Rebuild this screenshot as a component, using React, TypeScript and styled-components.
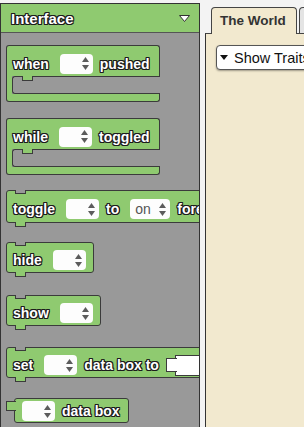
import React from "react";
import styled, { createGlobalStyle, css } from "styled-components";

const GREEN = "#8fca70";
const EDGE = "#3b3b3b";
const CANVAS = "#999999";
const BEIGE = "#f2e9cf";

const GlobalStyle = createGlobalStyle`
  html, body {
    margin: 0;
    padding: 0;
    background: #f3f3f3;
  }
  body {
    font-family: "Liberation Sans", Arial, sans-serif;
  }
`;

const outlined = css`
  color: #fff;
  font-weight: bold;
  text-shadow: -1px -1px 0 #1c1c1c, 0 -1px 0 #1c1c1c, 1px -1px 0 #1c1c1c,
    -1px 0 0 #1c1c1c, 1px 0 0 #1c1c1c, -1px 1px 0 #1c1c1c, 0 1px 0 #1c1c1c,
    1px 1px 0 #1c1c1c;
`;

const Page = styled.div`
  display: flex;
  height: 427px;
  padding-top: 3px;
  box-sizing: border-box;
  overflow: hidden;
`;

const Sidebar = styled.div`
  width: 200px;
  flex: none;
  box-sizing: border-box;
  border: 1px solid #333;
  border-bottom: none;
  background: ${CANVAS};
  display: flex;
  flex-direction: column;
  overflow: hidden;
`;

const CategoryHeader = styled.div`
  height: 29px;
  flex: none;
  box-sizing: border-box;
  background: ${GREEN};
  border-bottom: 1px solid #555;
  display: flex;
  align-items: center;
  justify-content: space-between;
  padding: 0 9px 0 10px;
`;

const HeaderTitle = styled.span`
  ${outlined};
  font-size: 15px;
`;

const Palette = styled.div`
  display: flex;
  flex-direction: column;
  align-items: flex-start;
  padding: 12px 0 0 5px;
`;

const Label = styled.span`
  ${outlined};
  font-size: 14px;
  white-space: nowrap;
`;

/* statement block: notch on top, tab below */
const StackBlock = styled.div<{ $mt: number; $h?: number }>`
  position: relative;
  flex: none;
  margin-top: ${(p) => p.$mt}px;
  height: ${(p) => p.$h ?? 31}px;
  box-sizing: border-box;
  display: flex;
  align-items: center;
  gap: 6px;
  padding: 5px 6px 0;
  background: ${GREEN};
  border: 1px solid ${EDGE};
  border-radius: 3px;
  white-space: nowrap;

  &::before {
    content: "";
    position: absolute;
    top: -1px;
    left: 8px;
    width: 9px;
    height: 3px;
    background: ${CANVAS};
    border: 1px solid ${EDGE};
    border-top: none;
  }
  &::after {
    content: "";
    position: absolute;
    bottom: -5px;
    left: 8px;
    width: 9px;
    height: 4px;
    background: ${GREEN};
    border: 1px solid ${EDGE};
    border-top: none;
  }
`;

/* C-shaped event block */
const CBlock = styled.div<{ $mt: number }>`
  flex: none;
  margin-top: ${(p) => p.$mt}px;
  display: flex;
  flex-direction: column;
`;

const CTop = styled.div`
  height: 31px;
  box-sizing: border-box;
  display: flex;
  align-items: center;
  gap: 6px;
  padding: 5px 9px 0 6px;
  background: ${GREEN};
  border: 1px solid ${EDGE};
  border-bottom: none;
  border-radius: 3px 3px 0 0;
`;

const CMouth = styled.div`
  display: flex;
  height: 18px;
`;

const CArm = styled.div`
  width: 5px;
  background: ${GREEN};
  border-left: 1px solid ${EDGE};
`;

const CSlot = styled.div`
  position: relative;
  flex: 1;
  box-sizing: border-box;
  background: ${CANVAS};
  border: 1px solid ${EDGE};
  border-right: none;
  border-radius: 3px 0 0 3px;

  &::before {
    content: "";
    position: absolute;
    top: -1px;
    left: 9px;
    width: 9px;
    height: 4px;
    background: ${GREEN};
    border: 1px solid ${EDGE};
    border-top: none;
  }
`;

const CBottom = styled.div`
  height: 8px;
  box-sizing: border-box;
  background: ${GREEN};
  border: 1px solid ${EDGE};
  border-top: none;
  border-radius: 0 0 3px 3px;
`;

/* value block with an output tab on the left */
const Reporter = styled.div<{ $mt: number }>`
  position: relative;
  flex: none;
  margin-top: ${(p) => p.$mt}px;
  margin-left: 8px;
  height: 25px;
  box-sizing: border-box;
  display: flex;
  align-items: center;
  gap: 6px;
  padding: 1px 8px 0 2px;
  background: ${GREEN};
  border: 1px solid ${EDGE};
  border-radius: 3px;

  &::before {
    content: "";
    position: absolute;
    left: -9px;
    top: 2px;
    width: 9px;
    height: 8px;
    background: ${GREEN};
    border: 1px solid ${EDGE};
    border-right: none;
  }
`;

const Dropdown = styled.div<{ $w?: number }>`
  flex: none;
  width: ${(p) => p.$w ?? 33}px;
  height: 20px;
  box-sizing: border-box;
  margin: 0 1px 0 5px;
  background: #fdfdfd;
  border-radius: 4px;
  display: flex;
  align-items: center;
  justify-content: space-between;
  padding: 0 4px 0 5px;
`;

const DropdownValue = styled.span`
  font-size: 14px;
  color: #555;
  margin-top: -1px;
`;

const InputSlot = styled.div`
  position: relative;
  flex: none;
  width: 40px;
  height: 21px;
  box-sizing: border-box;
  margin-left: 10px;
  background: #fff;
  border: 1px solid ${EDGE};

  &::before {
    content: "";
    position: absolute;
    left: -10px;
    top: 2px;
    width: 10px;
    height: 12px;
    background: #fff;
    border: 1px solid ${EDGE};
    border-right: none;
  }
`;

const Workspace = styled.div`
  margin-left: 5px;
  flex: 1;
  min-width: 0;
  display: flex;
  flex-direction: column;
`;

const TabStrip = styled.div`
  position: relative;
  z-index: 1;
  flex: none;
  height: 30px;
  display: flex;
  align-items: flex-end;
  gap: 2px;
  padding-left: 6px;
`;

const Tab = styled.div<{ $active?: boolean }>`
  flex: none;
  height: ${(p) => (p.$active ? 27 : 26)}px;
  margin-bottom: ${(p) => (p.$active ? -1 : 0)}px;
  box-sizing: border-box;
  display: flex;
  align-items: center;
  padding: 0 10px 1px ${(p) => (p.$active ? 8 : 12)}px;
  border: 1px solid #444;
  border-bottom: none;
  border-radius: 4px 4px 0 0;
  background: ${(p) => (p.$active ? BEIGE : "#e4e4e4")};
  color: #333;
  font-size: 13.5px;
  font-weight: bold;
  white-space: nowrap;
`;

const WorldPanel = styled.div`
  flex: 1;
  background: ${BEIGE};
  border-top: 1px solid #444;
  border-left: 1px solid #333;
  padding: 11px 0 0 10px;
  overflow: hidden;
`;

const TraitsButton = styled.div`
  display: inline-flex;
  align-items: center;
  gap: 6px;
  height: 25px;
  box-sizing: border-box;
  padding: 0 8px 0 3px;
  background: #fff;
  border: 1px solid #555;
  border-radius: 4px;
  box-shadow: 0 1px 2px rgba(0, 0, 0, 0.35);
  color: #111;
  font-size: 14.5px;
  white-space: nowrap;
`;

const Arrows = () => (
  <svg width="7" height="13" viewBox="0 0 7 13">
    <polygon points="0,5 3.5,0 7,5" fill="#5c5c5c" />
    <polygon points="0,8 3.5,13 7,8" fill="#5c5c5c" />
  </svg>
);

const Select: React.FC<{ value?: string; width?: number }> = ({
  value,
  width,
}) => (
  <Dropdown $w={width}>
    <DropdownValue>{value ?? ""}</DropdownValue>
    <Arrows />
  </Dropdown>
);

export default function App() {
  return (
    <>
      <GlobalStyle />
      <Page>
        <Sidebar>
          <CategoryHeader>
            <HeaderTitle>Interface</HeaderTitle>
            <svg width="11" height="7" viewBox="0 0 11 7">
              <polygon
                points="0.5,0.5 10.5,0.5 5.5,6.5"
                fill="#fff"
                stroke="#333"
                strokeWidth="1"
              />
            </svg>
          </CategoryHeader>
          <Palette>
            <CBlock $mt={0}>
              <CTop>
                <Label>when</Label>
                <Select />
                <Label>pushed</Label>
              </CTop>
              <CMouth>
                <CArm />
                <CSlot />
              </CMouth>
              <CBottom />
            </CBlock>

            <CBlock $mt={16}>
              <CTop>
                <Label>while</Label>
                <Select />
                <Label>toggled</Label>
              </CTop>
              <CMouth>
                <CArm />
                <CSlot />
              </CMouth>
              <CBottom />
            </CBlock>

            <StackBlock $mt={15} $h={33}>
              <Label>toggle</Label>
              <Select />
              <Label>to</Label>
              <Select value="on" width={40} />
              <Label>forever</Label>
            </StackBlock>

            <StackBlock $mt={19}>
              <Label>hide</Label>
              <Select />
            </StackBlock>

            <StackBlock $mt={22}>
              <Label>show</Label>
              <Select />
            </StackBlock>

            <StackBlock $mt={21}>
              <Label>set</Label>
              <Select />
              <Label>data box to</Label>
              <InputSlot />
            </StackBlock>

            <Reporter $mt={20}>
              <Select />
              <Label>data box</Label>
            </Reporter>
          </Palette>
        </Sidebar>

        <Workspace>
          <TabStrip>
            <Tab $active>The World</Tab>
            <Tab>Source</Tab>
          </TabStrip>
          <WorldPanel>
            <TraitsButton>
              <svg width="8" height="5" viewBox="0 0 8 5">
                <polygon points="0,0 8,0 4,5" fill="#111" />
              </svg>
              Show Traits
            </TraitsButton>
          </WorldPanel>
        </Workspace>
      </Page>
    </>
  );
}
